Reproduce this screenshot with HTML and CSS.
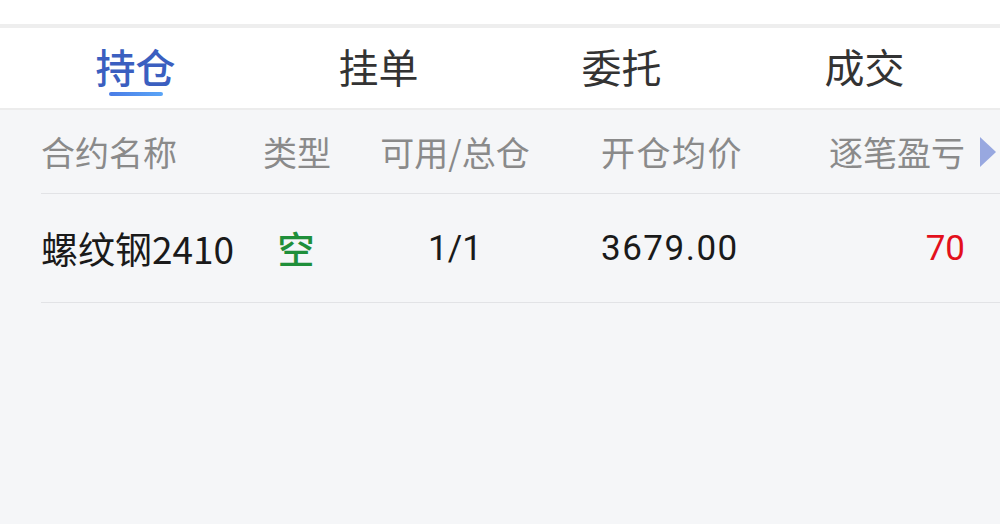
FILE: index.html
```html
<!DOCTYPE html>
<html lang="zh-CN">
<head>
    <meta charset="UTF-8">
    <meta name="viewport" content="width=device-width, initial-scale=1.0">
    <title>持仓</title>
    <link rel="stylesheet" href="styles.css">
</head>
<body>
    <div class="top-space"></div>
    <div class="tab-bar">
        <div class="tab active">
            <span class="tab-label">持仓</span>
            <span class="tab-line"></span>
        </div>
        <div class="tab"><span class="tab-label">挂单</span></div>
        <div class="tab"><span class="tab-label">委托</span></div>
        <div class="tab"><span class="tab-label">成交</span></div>
    </div>
    <div class="table">
        <div class="row head-row">
            <div class="cell col-name">合约名称</div>
            <div class="cell col-type">类型</div>
            <div class="cell col-avail">可用/总仓</div>
            <div class="cell col-price">开仓均价</div>
            <div class="cell col-pnl">逐笔盈亏</div>
            <span class="more-arrow"></span>
        </div>
        <div class="row data-row">
            <div class="cell col-name">螺纹钢2410</div>
            <div class="cell col-type short">空</div>
            <div class="cell col-avail num">1/1</div>
            <div class="cell col-price num">3679.00</div>
            <div class="cell col-pnl num loss">70</div>
        </div>
    </div>
</body>
</html>
```

FILE: styles.css
```css
body {
    margin: 0;
    width: 1000px;
    height: 524px;
    overflow: hidden;
    background-color: #f5f6f8;
    font-family: "Noto Sans CJK SC", "Noto Sans", sans-serif;
}
.top-space {
    height: 24px;
    background-color: #fff;
    border-bottom: 4px solid #eeeeee;
}
.tab-bar {
    display: flex;
    height: 80px;
    padding-left: 14px;
    background-color: #fff;
    border-bottom: 2px solid #ececec;
}
.tab {
    width: 243px;
    display: flex;
    flex-direction: column;
    align-items: center;
    padding-top: 18px;
}
.tab-label {
    font-size: 40px;
    line-height: 40px;
    color: #333;
}
.tab.active .tab-label {
    color: #3b5fc0;
    font-weight: 500;
}
.tab-line {
    width: 54px;
    height: 4px;
    margin-top: 6px;
    border-radius: 2px;
    background: linear-gradient(90deg, #4a7ce6, #5aa5f7);
}
.table {
    margin-left: 41px;
}
.row {
    display: flex;
    align-items: center;
    border-bottom: 1px solid #e2e3e6;
}
.head-row {
    height: 83px;
    padding-right: 4px;
    font-size: 34px;
    color: #8a8a8a;
}
.data-row {
    height: 108px;
    padding-right: 35px;
    font-size: 37px;
    color: #1a1a1a;
}
.cell {
    white-space: nowrap;
}
.col-name {
    width: 222px;
}
.col-type {
    width: 66px;
    text-align: center;
}
.col-avail {
    width: 252px;
    text-align: center;
}
.col-price {
    width: 140px;
    margin-left: 20px;
    letter-spacing: 1.5px;
}
.col-pnl {
    flex: 1;
    text-align: right;
}
.num {
    font-family: Roboto, "Noto Sans", sans-serif;
    font-size: 35px;
}
.short {
    color: #1f8f3a;
    font-weight: 500;
}
.loss {
    color: #e3101c;
}
.more-arrow {
    width: 0;
    height: 0;
    margin-left: 15px;
    border-top: 15px solid transparent;
    border-bottom: 15px solid transparent;
    border-left: 16px solid #98a8e0;
}
```
